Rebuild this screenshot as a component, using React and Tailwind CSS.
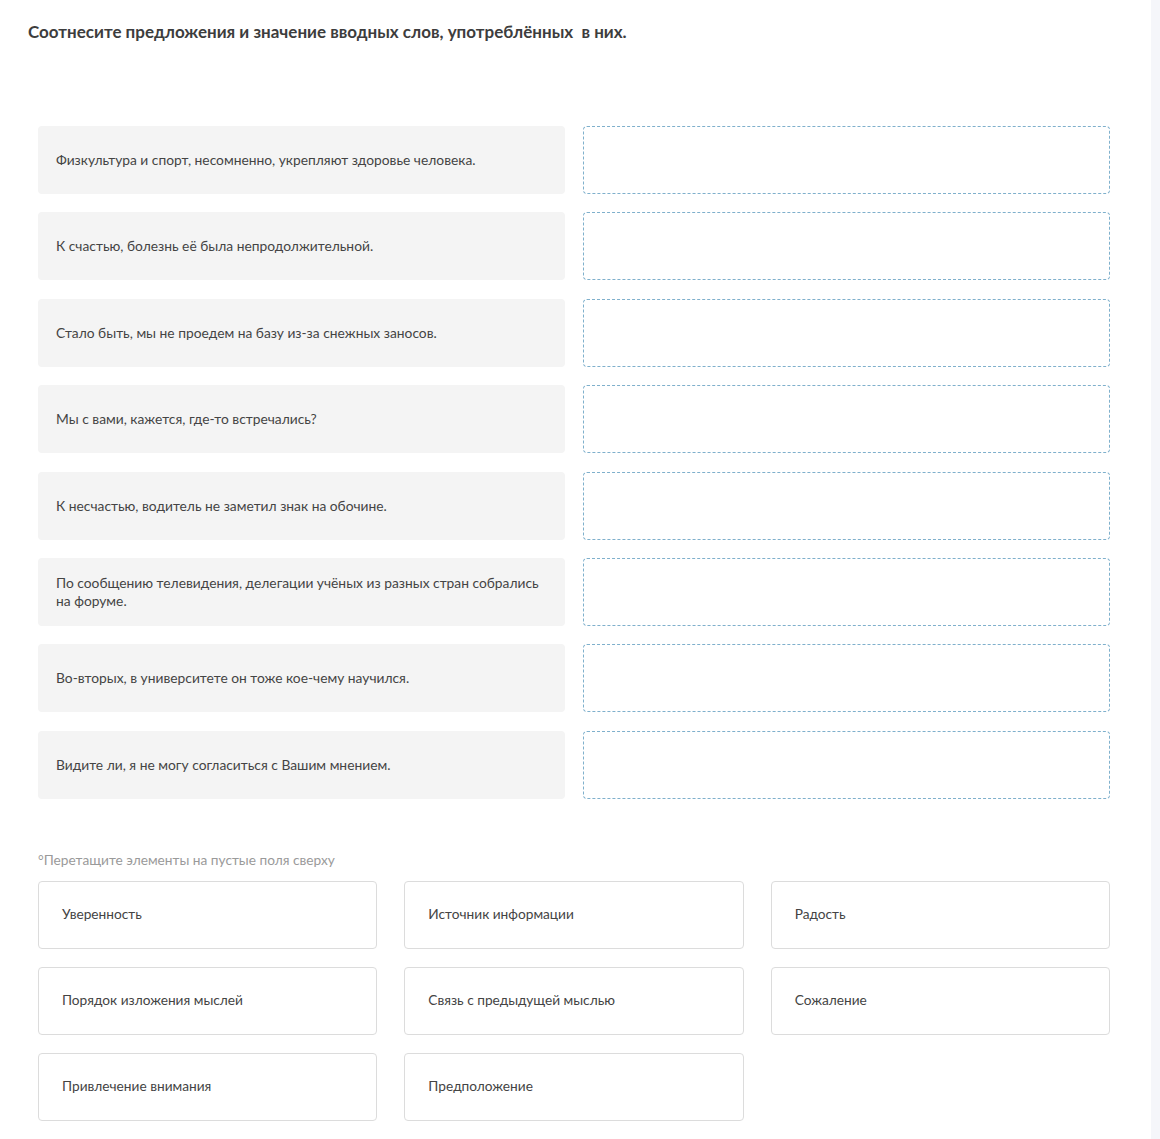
import React from 'react';

const sentences = [
  'Физкультура и спорт, несомненно, укрепляют здоровье человека.',
  'К счастью, болезнь её была непродолжительной.',
  'Стало быть, мы не проедем на базу из-за снежных заносов.',
  'Мы с вами, кажется, где-то встречались?',
  'К несчастью, водитель не заметил знак на обочине.',
  'По сообщению телевидения, делегации учёных из разных стран собрались на форуме.',
  'Во-вторых, в университете он тоже кое-чему научился.',
  'Видите ли, я не могу согласиться с Вашим мнением.',
];

const options = [
  'Уверенность',
  'Источник информации',
  'Радость',
  'Порядок изложения мыслей',
  'Связь с предыдущей мыслью',
  'Сожаление',
  'Привлечение внимания',
  'Предположение',
];

function App() {
  return (
    <div className="flex min-h-[1139px] bg-white text-[#3a3a3a]" style={{ fontFamily: 'Lato, "Open Sans", sans-serif' }}>
      <div className="w-[1151px] shrink-0">
        <h1 className="pl-[28px] pt-[21px] text-[17px] font-bold leading-[22px] text-[#3d3d3d]">
          Соотнесите предложения и значение вводных слов, употреблённых&nbsp; в них.
        </h1>

        <div className="ml-[38px] mt-[83px] grid w-[1072px] grid-cols-2 gap-x-[18px] gap-y-[18.4px]">
          {sentences.map((s) => (
            <React.Fragment key={s}>
              <div className="flex h-[68px] items-center rounded-[4px] bg-[#f4f4f4] pl-[18px] pr-[16px] text-[13.8px] leading-[18px] text-[#444]">
                {s}
              </div>
              <div className="h-[68px] rounded-[4px] border border-dashed border-[#7fb0cc]" />
            </React.Fragment>
          ))}
        </div>

        <p className="ml-[38px] mt-[52px] text-[13.7px] leading-[18px] text-[#9a9a9a]">
          °Перетащите элементы на пустые поля сверху
        </p>

        <div className="ml-[38px] mt-[12px] grid w-[1072px] grid-cols-3 gap-x-[27px] gap-y-[18px]">
          {options.map((o) => (
            <div
              key={o}
              className="flex h-[68px] items-center rounded-[4px] border border-[#dcdcdc] bg-white pl-[23px] text-[13.7px] text-[#444]"
            >
              {o}
            </div>
          ))}
        </div>
      </div>
      <div className="flex-1 bg-[#f5f6fa]" />
    </div>
  );
}

export default App;
